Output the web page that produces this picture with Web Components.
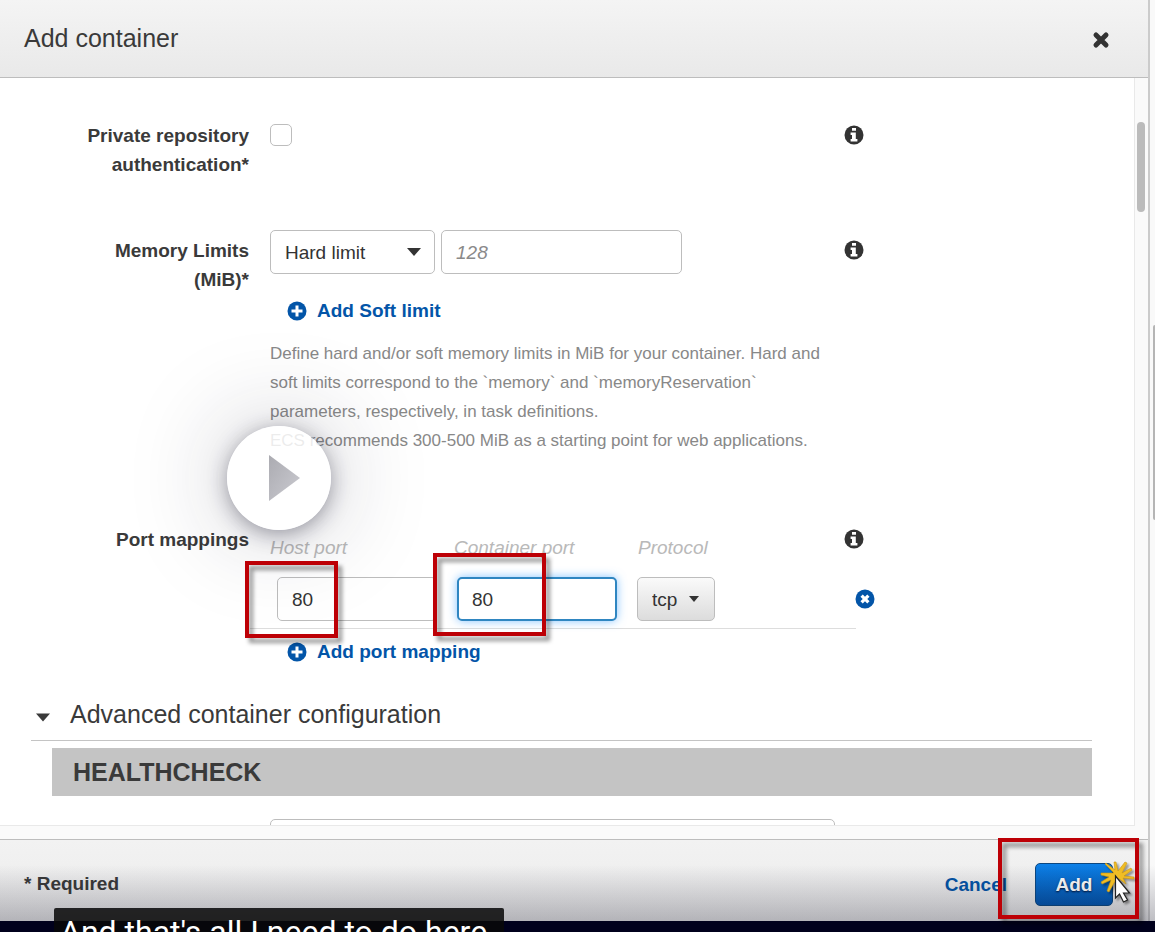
<!DOCTYPE html>
<html lang="en">
<head>
<meta charset="utf-8">
<title>Add container</title>
<style>
  body { margin: 0; font-family: "Liberation Sans", Arial, sans-serif; font-size: 19px; line-height: 29px; color: #3a3a3a; background: #00001c; }
</style>
</head>
<body>
<video-frame>
  <modal-dialog>
    <dialog-header slot="header">Add container</dialog-header>
    <container-form></container-form>
    <dialog-footer slot="footer">* Required</dialog-footer>
  </modal-dialog>
  <video-caption slot="caption">And that's all I need to do here.</video-caption>
</video-frame>

<script>
const define = (name, html) => {
  const template = document.createElement('template');
  template.innerHTML = html;
  customElements.define(name, class extends HTMLElement {
    constructor() {
      super();
      this.attachShadow({ mode: 'open' }).append(template.content.cloneNode(true));
    }
  });
};

const glyphs = {
  info: '<circle cx="10" cy="10" r="9.5" fill="currentColor"/><path fill="#fff" d="M8 3h4v2.7H8zM6.600 7.500h5.200v6.500h1.600v2.500H6.600V14H8v-4H6.600z"/>',
  plus: '<circle cx="10" cy="10" r="9.5" fill="currentColor"/><path d="M10 4.500v11M4.500 10h11" stroke="#fff" stroke-width="3"/>',
  remove: '<circle cx="10" cy="10" r="9.5" fill="currentColor"/><path d="M6.600 6.600l6.800 6.800M13.400 6.600l-6.800 6.800" stroke="#fff" stroke-width="3.200"/>',
  close: '<path d="M5 5l10 10M15 5l-10 10" stroke="currentColor" stroke-width="5" stroke-linecap="round"/>',
  caret: '<path d="M3 6.500h14L10 14.500z" fill="currentColor"/>'
};
customElements.define('ui-icon', class extends HTMLElement {
  constructor() { super(); this.attachShadow({ mode: 'open' }); }
  connectedCallback() {
    this.shadowRoot.innerHTML = `<style>:host{display:inline-flex;width:20px;height:20px;flex:none}svg{width:100%;height:100%}</style>
      <svg viewBox="0 0 20 20" aria-hidden="true">${glyphs[this.getAttribute('name')] || ''}</svg>`;
  }
});

define('video-frame', `
  <style>
    :host { display: flex; flex-direction: column; height: 100vh; min-height: 600px; position: relative; overflow: hidden; }
    .screen { flex: 1; min-height: 0; display: flex; background: #f9f9f9; position: relative; }
    ::slotted(modal-dialog) { flex: 1; }
    .page-scroll { width: 5px; display: flex; flex-direction: column; align-items: flex-end; }
    .page-scroll::before { content: ""; flex: 325 0 0; }
    .page-scroll::after { content: ""; flex: 401 0 0; }
    .thumb { width: 2px; flex: 195 0 0; background: #b5b5b5; border-radius: 2px 0 0 2px; }
    .shade { position: absolute; inset: auto 0 0 0; height: 56px; background: linear-gradient(rgba(20,20,40,0), rgba(20,20,40,.26)); pointer-events: none; }
    .strip { height: 11px; }
  </style>
  <div class="screen"><slot></slot><div class="page-scroll"><div class="thumb"></div></div><div class="shade"></div></div>
  <div class="strip"></div>
  <slot name="caption"></slot>`);

define('video-caption', `
  <style>
    :host { position: absolute; left: 54px; bottom: 0; box-sizing: border-box; width: 450px; height: 24px; overflow: hidden; padding: 5px 6px 0; white-space: nowrap;
      border-radius: 2px 2px 0 0; background: rgba(8,8,8,.86); color: #fff; font: 400 32px/38px Roboto, sans-serif; }
  </style><slot></slot>`);

define('modal-dialog', `
  <style>
    :host { display: flex; flex-direction: column; min-width: 0; border-right: 2px solid #cbcbcb; box-sizing: border-box; }
    .middle { flex: 1; min-height: 0; display: flex; background: #fafafa; padding-bottom: 13px; }
    .view { flex: 1; min-width: 0; overflow: hidden; background: #fff; border: solid #e9e9e9; border-width: 0 1px 1px 0; }
    .rail { width: 13px; margin-top: 44px; }
    .thumb { width: 8px; height: 90px; margin-left: 2px; border-radius: 4px; background: #bbb; }
  </style>
  <slot name="header"></slot>
  <div class="middle"><div class="view"><slot></slot></div><div class="rail"><div class="thumb"></div></div></div>
  <slot name="footer"></slot>`);

define('dialog-header', `
  <style>
    :host { display: flex; align-items: center; justify-content: space-between; box-sizing: border-box; height: 78px; padding: 0 37px 0 24px;
      background: linear-gradient(#f4f4f4, #e9e9e9); border-bottom: 1px solid #bdbdbd; }
    h1 { margin: 0; font-size: 25px; font-weight: 400; line-height: 29px; }
    button { display: flex; border: 0; padding: 0; background: none; color: #333; margin-top: 3px; }
  </style>
  <h1><slot></slot></h1><button type="button" aria-label="Close"><ui-icon name="close"></ui-icon></button>`);

define('call-out', `
  <style>
    :host { position: absolute; box-sizing: border-box; border: 4px solid #bd0006; filter: drop-shadow(4px 5px 2px rgba(0,0,0,.42)); pointer-events: none; z-index: 2; }
  </style>`);

define('form-row', `
  <style>
    :host { display: grid; grid-template-columns: 249px 565px 20px; column-gap: 10px; padding-bottom: 51px; position: relative; }
    :host([last]) { padding-bottom: 0; }
    .label { padding: 6px 0 0 60px; text-align: right; font-weight: 700; }
    .field { min-width: 0; padding-left: 11px; margin-right: -11px; }
    button { display: flex; border: 0; padding: 0; margin: 10px 0 0 10px; background: none; color: #333; height: 20px; }
  </style>
  <div class="label"><slot name="label"></slot></div>
  <div class="field"><slot></slot></div>
  <button type="button" aria-label="More information"><ui-icon name="info"></ui-icon></button>`);

define('play-button', `
  <style>
    :host { position: absolute; left: 227px; width: 104px; height: 104px; z-index: 1; }
    button { width: 100%; height: 100%; padding: 0; border: 0; border-radius: 50%; background: rgba(255,255,255,.84);
      box-shadow: 0 4px 20px rgba(30,30,55,.42), 0 0 100px rgba(30,30,50,.28); }
    svg { display: block; width: 104px; height: 104px; }
  </style>
  <button type="button" aria-label="Play"><svg viewBox="0 0 104 104"><defs><linearGradient id="g" x1="0" y1="0" x2="1" y2="1"><stop offset="0" stop-color="#ababb1"/><stop offset="1" stop-color="#cbcbd1"/></linearGradient></defs><path d="M42 29v46l31-23z" fill="url(#g)"/></svg></button>`);

define('container-form', `
  <style>
    :host { display: block; padding-top: 37px; }
    input, select { box-sizing: border-box; height: 44px; border: 1px solid #bdbdbd; border-radius: 5px; background-color: #fff; font: inherit; color: #333; padding: 0 14px; margin: 0; outline: 0; }
    input[type=text] { padding-top: 2px; }
    input::placeholder { color: #8a8a8a; font-style: italic; opacity: 1; }
    select { appearance: none; background-repeat: no-repeat; }
    .check { appearance: none; display: block; width: 22px; height: 22px; padding: 0; margin: 9px 0 0; }
    .limits { display: flex; gap: 6px; }
    .limits select { width: 165px; background-image: url("data:image/svg+xml,%3Csvg xmlns='http://www.w3.org/2000/svg' width='16' height='10'%3E%3Cpath d='M1 1h14L8 9z' fill='%23333'/%3E%3C/svg%3E"); background-position: 135px 16px; }
    .limits input { width: 241px; }
    .add { display: flex; align-items: center; gap: 10px; margin: 22px 0 0 17px; padding: 0; border: 0; background: none; color: #0355a8; font: inherit; font-weight: 700; }
    .help { margin: 14px 0 13px; color: #888; font-size: 17px; width: 550px; }
    .heads { display: grid; grid-template-columns: 184px 184px auto; padding-top: 14px; color: #b9b9b9; font-style: italic; }
    .ports { display: flex; margin-left: -20px; margin-top: 15px; width: 625px; align-items: center; }
    .line { flex: 1; display: flex; gap: 20px; padding: 0 0 7px 27px; border-bottom: 1px solid #ddd; }
    .line input { width: 160px; }
    .line .active { border: 2px solid #2f86c1; padding: 2px 13px 0; box-shadow: 0 0 10px rgba(80,170,255,.7); }
    .line select { width: 78px; background-image: url("data:image/svg+xml,%3Csvg xmlns='http://www.w3.org/2000/svg' width='12' height='7'%3E%3Cpath d='M1 0h10L6 6z' fill='%23333'/%3E%3C/svg%3E"), linear-gradient(#fafafa, #dcdcdc); background-position: 50px 18px, 0 0; }
    .remove { display: flex; border: 0; padding: 0; margin: 0 0 8px -1px; background: none; color: #0355a8; }
    .ports + .add { margin-top: 8px; }
    .one { left: 245px; top: 42px; width: 93px; height: 77px; }
    .two { left: 433px; top: 34px; width: 113px; height: 83px; }
    .advanced { margin: 34px 42px 0 31px; }
    h2 { display: flex; align-items: center; gap: 17px; margin: 0; padding: 0 0 11px 2px; font-size: 25px; font-weight: 400; border-bottom: 1px solid #c4c4c4; }
    h2 ui-icon { margin-top: 4px; }
    h3 { margin: 7px 0 23px 21px; padding: 10px 21px; font-size: 25px; line-height: 28px; background: #c4c4c4; }
    .command { display: block; width: 565px; margin-left: 239px; }
    play-button { top: 196px; }
  </style>
  <form-row>
    <label slot="label" for="private">Private repository authentication*</label>
    <input class="check" id="private" type="checkbox">
  </form-row>
  <form-row>
    <label slot="label" for="memory">Memory Limits<br>(MiB)*</label>
    <div class="limits">
      <select aria-label="Limit type"><option>Hard limit</option></select>
      <input id="memory" type="text" placeholder="128">
    </div>
    <button class="add" type="button"><ui-icon name="plus"></ui-icon>Add Soft limit</button>
    <p class="help">Define hard and/or soft memory limits in MiB for your container. Hard and soft limits correspond to the \`memory\` and \`memoryReservation\` parameters, respectively, in task definitions.<br>ECS recommends 300-500 MiB as a starting point for web applications.</p>
    <play-button></play-button>
  </form-row>
  <form-row last>
    <span slot="label">Port mappings</span>
    <div class="heads"><label for="host">Host port</label><label for="target">Container port</label><label for="protocol">Protocol</label></div>
    <div class="ports">
      <div class="line"><input id="host" type="text" value="80"><input class="active" id="target" type="text" value="80"><select id="protocol"><option>tcp</option></select></div>
      <button class="remove" type="button" aria-label="Remove port mapping"><ui-icon name="remove"></ui-icon></button>
    </div>
    <button class="add" type="button"><ui-icon name="plus"></ui-icon>Add port mapping</button>
    <call-out class="one"></call-out>
    <call-out class="two"></call-out>
  </form-row>
  <section class="advanced">
    <h2><ui-icon name="caret"></ui-icon>Advanced container configuration</h2>
    <h3>HEALTHCHECK</h3>
    <input class="command" type="text" aria-label="Command">
  </section>`);

define('click-pointer', `
  <style>:host { position: absolute; left: 66px; top: -2px; width: 36px; height: 46px; } svg { width: 36px; height: 46px; overflow: visible; filter: drop-shadow(2px 2px 1px rgba(0,0,0,.4)); }</style>
  <svg viewBox="0 0 36 46" aria-hidden="true">
    <path fill="#f0bd25" stroke="#cc960c" stroke-width=".6" d="M13 12L4 3l1-1 9 7-1-8h2l2 9 7-9 2 1-5 10 9-5 1 2-8 6 10 1v2l-11-1 3 6-8-6-4 5-5 9-2-1 4-11-9 4-1-2 8-5-8-2v-2z"/>
    <path fill="#fff" stroke="#222" stroke-width="1.200" d="M14.500 15v22l4-4 4 8 4-2-4-7h6z"/>
  </svg>`);

define('dialog-footer', `
  <style>
    :host { display: flex; align-items: center; box-sizing: border-box; height: 82px; padding: 6px 35px 0 24px; border-top: 1px solid #bdbdbd;
      background: linear-gradient(#f2f2f2, #ebebeb); font-weight: 700; position: relative; }
    .required { flex: 1; }
    a { color: #0355a8; text-decoration: none; margin: 2px 28px 0 0; }
    .wrap { position: relative; display: flex; margin-top: 2px; }
    button { width: 78px; height: 43px; padding: 0; border: 1px solid #0b4781; border-radius: 5px; color: #fff; font: inherit; text-shadow: 0 1px 2px #013;
      background: linear-gradient(#0c80e8, #0355ae); }
    call-out { left: -37px; top: -25px; width: 141px; height: 81px; }
    click-pointer { z-index: 3; }
  </style>
  <span class="required"><slot></slot></span>
  <a href="#">Cancel</a>
  <div class="wrap"><button type="button">Add</button><call-out></call-out><click-pointer></click-pointer></div>`);
</script>
</body>
</html>
